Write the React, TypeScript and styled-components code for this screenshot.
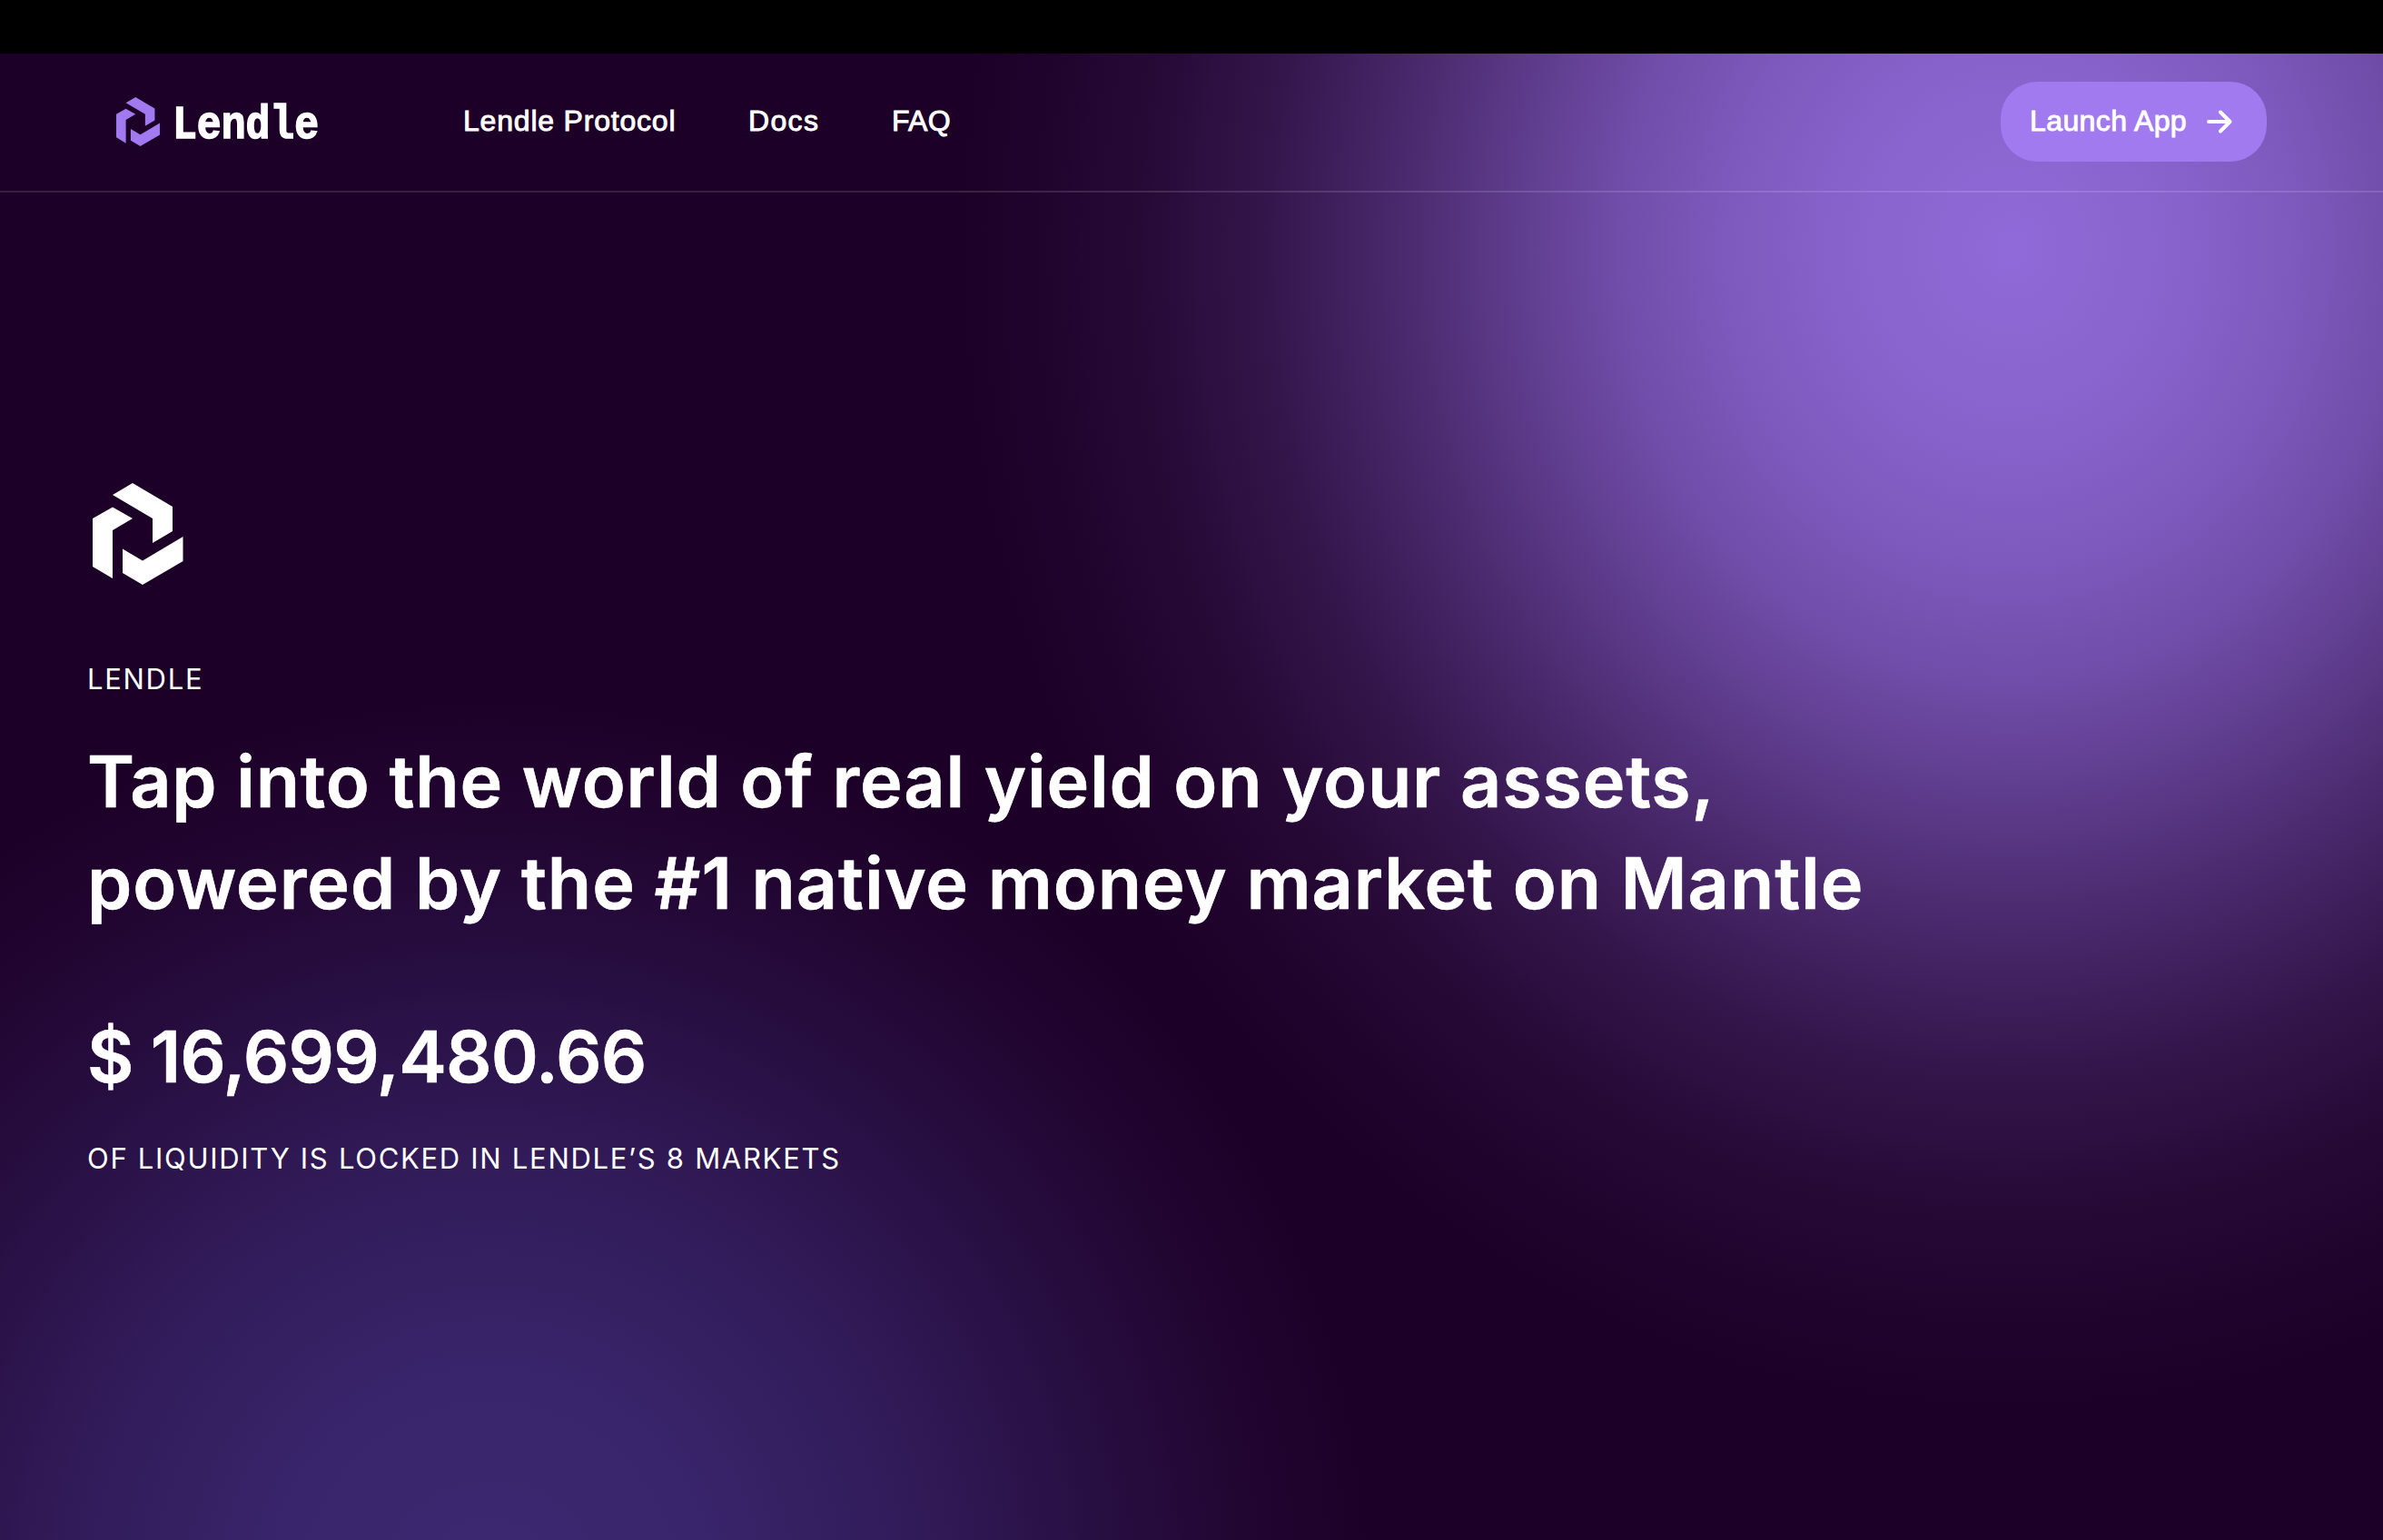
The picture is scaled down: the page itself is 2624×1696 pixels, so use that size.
import React from 'react';
import styled, { createGlobalStyle } from 'styled-components';

const GlobalStyle = createGlobalStyle`
  * {
    box-sizing: border-box;
  }

  body {
    margin: 0;
    background-color: #1d0027;
    color: #ffffff;
    font-family: Inter, sans-serif;
  }
`;

const Page = styled.div`
  display: flex;
  flex-direction: column;
  width: 2624px;
  height: 1696px;
  overflow: hidden;
`;

const TopStrip = styled.div`
  flex: none;
  height: 59px;
  background-color: #000000;
`;

const Backdrop = styled.div`
  display: flex;
  flex: 1;
  flex-direction: column;
  background-color: #1d0027;
  background-image:
    radial-gradient(
      1170px 1290px at 2215px 215px,
      rgba(144, 106, 216, 1) 0%,
      rgba(141, 104, 212, 0.96) 14%,
      rgba(140, 103, 212, 0.88) 26%,
      rgba(140, 103, 212, 0.75) 37%,
      rgba(140, 103, 212, 0.57) 48%,
      rgba(140, 103, 212, 0.38) 59%,
      rgba(140, 103, 212, 0.21) 70%,
      rgba(140, 103, 212, 0.09) 82%,
      rgba(140, 103, 212, 0.03) 92%,
      rgba(140, 103, 212, 0) 100%
    ),
    radial-gradient(
      980px 1000px at 540px 1700px,
      rgba(62, 44, 120, 0.93) 0%,
      rgba(62, 44, 120, 0.83) 25%,
      rgba(62, 44, 120, 0.61) 48%,
      rgba(62, 44, 120, 0.34) 68%,
      rgba(62, 44, 120, 0.12) 86%,
      rgba(62, 44, 120, 0) 100%
    );
`;

const Header = styled.header`
  display: flex;
  align-items: center;
  height: 153px;
  padding: 0 128px 1px;
  border-bottom: 2px solid rgba(255, 255, 255, 0.13);
`;

const Brand = styled.a`
  display: flex;
  align-items: center;
  gap: 16px;
  width: 382px;
`;

const Wordmark = styled.svg`
  display: block;
  overflow: visible;
  font-family: 'Liberation Mono', monospace;
  font-size: 52px;
  font-weight: 700;
`;

const Nav = styled.nav`
  display: flex;
  flex: 1;
  gap: 79.5px;
`;

const NavLink = styled.a<{ $spacing: number }>`
  padding-bottom: 2px;
  font-family: 'Liberation Sans', sans-serif;
  font-size: 32px;
  line-height: 40px;
  letter-spacing: ${({ $spacing }) => $spacing}px;
  -webkit-text-stroke: 0.9px #ffffff;
`;

const LaunchButton = styled.button`
  display: flex;
  align-items: center;
  justify-content: space-between;
  width: 293px;
  height: 88px;
  padding: 0 38px 0 32px;
  border: none;
  border-radius: 40px;
  background-color: #a07aee;
  color: #ffffff;
`;

const Hero = styled.main`
  display: flex;
  flex-direction: column;
  align-items: flex-start;
  padding: 320px 96px 0;
`;

const Mark = styled.svg`
  display: block;
  flex: none;
`;

const Label = styled.p<{ $spacing: number }>`
  margin: 0;
  font-size: 31px;
  line-height: 32px;
  letter-spacing: ${({ $spacing }) => $spacing}px;
  white-space: nowrap;
`;

const Title = styled.h1`
  display: flex;
  flex-direction: column;
  margin: 40px 0 85px;
  font-size: 79px;
  font-weight: 600;
  line-height: 112px;
  white-space: nowrap;
  -webkit-text-stroke: 0.6px #ffffff;
`;

const TitleLine = styled.span<{ $spacing: number }>`
  letter-spacing: ${({ $spacing }) => $spacing}px;
`;

const Amount = styled.div`
  margin-bottom: 47px;
  font-size: 79px;
  font-weight: 600;
  line-height: 100px;
  letter-spacing: -0.8px;
  white-space: nowrap;
  -webkit-text-stroke: 0.6px #ffffff;
`;

const HeroMark = styled(Mark)`
  margin: 0 0 88px 6px;
`;

type LogoShapeProps = {
  color: string;
};

function LogoShape({ color }: LogoShapeProps) {
  return (
    <g fill={color}>
      <path d="M22 13 44 0 88 26V53L66 66V39Z" />
      <path d="M0 39 22 26.5 44 39 22 52V105L0 92Z" />
      <path d="M33 72.5 55 85.5 99.5 59V86L55 112 33 99Z" />
    </g>
  );
}

export default function App() {
  return (
    <Page>
      <GlobalStyle />
      <TopStrip />
      <Backdrop>
        <Header>
          <Brand>
            <Mark width="48" height="54" viewBox="0 0 99.5 112">
              <LogoShape color="#a07aee" />
            </Mark>
            <Wordmark width="160" height="54" viewBox="0 0 160 54">
              <text
                x="-2"
                y="44.5"
                fill="#ffffff"
                stroke="#ffffff"
                strokeWidth="1.6"
                textLength="161"
                lengthAdjust="spacingAndGlyphs"
              >
                Lendle
              </text>
            </Wordmark>
          </Brand>
          <Nav>
            <NavLink $spacing={0.8}>Lendle Protocol</NavLink>
            <NavLink $spacing={1.4}>Docs</NavLink>
            <NavLink $spacing={0.4}>FAQ</NavLink>
          </Nav>
          <LaunchButton>
            <NavLink as="span" $spacing={0.4}>
              Launch App
            </NavLink>
            <svg width="28" height="26" viewBox="0 0 28 26" fill="none" stroke="#ffffff" strokeWidth="4">
              <path d="M2 13H25M15 2.5 25.5 13 15 23.5" strokeLinecap="round" strokeLinejoin="round" />
            </svg>
          </LaunchButton>
        </Header>
        <Hero>
          <HeroMark width="99.5" height="112" viewBox="0 0 99.5 112">
            <LogoShape color="#ffffff" />
          </HeroMark>
          <Label $spacing={1.7}>LENDLE</Label>
          <Title>
            <TitleLine $spacing={0.82}>Tap into the world of real yield on your assets,</TitleLine>
            <TitleLine $spacing={0.92}>powered by the #1 native money market on Mantle</TitleLine>
          </Title>
          <Amount>$ 16,699,480.66</Amount>
          <Label $spacing={1.7}>OF LIQUIDITY IS LOCKED IN LENDLE’S 8 MARKETS</Label>
        </Hero>
      </Backdrop>
    </Page>
  );
}
